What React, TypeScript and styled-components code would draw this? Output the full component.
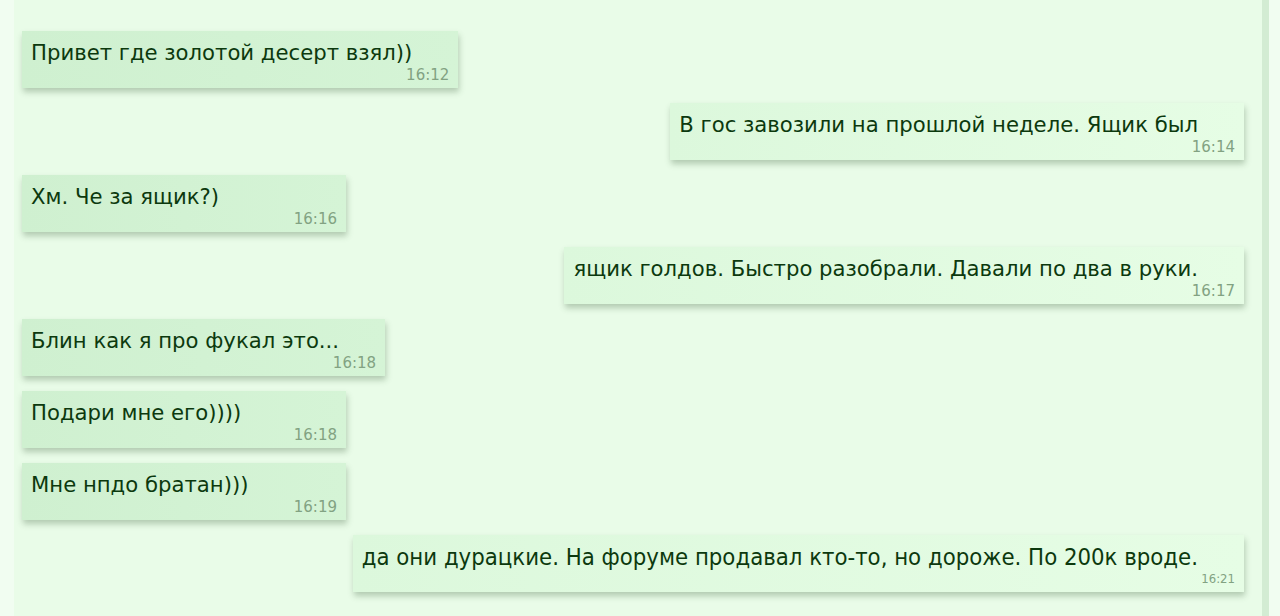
import React from 'react';
import styled, { createGlobalStyle } from 'styled-components';

interface Message {
    text: string;
    time: string;
    mine: boolean;
    narrow?: boolean;
}

const messages: Message[] = [
    { text: 'Привет где золотой десерт взял))', time: '16:12', mine: false },
    { text: 'В гос завозили на прошлой неделе. Ящик был', time: '16:14', mine: true },
    { text: 'Хм. Че за ящик?)', time: '16:16', mine: false },
    { text: 'ящик голдов. Быстро разобрали. Давали по два в руки.', time: '16:17', mine: true },
    { text: 'Блин как я про фукал это...', time: '16:18', mine: false },
    { text: 'Подари мне его))))', time: '16:18', mine: false },
    { text: 'Мне нпдо братан)))', time: '16:19', mine: false },
    { text: 'да они дурацкие. На форуме продавал кто-то, но дороже. По 200к вроде.', time: '16:21', mine: true, narrow: true },
];

const GlobalStyle = createGlobalStyle`
    html, body {
        margin: 0;
        padding: 0;
        background: #f1fdf1;
        height: 100%;
        overflow: hidden;
    }
`;

const Page = styled.div`
    display: flex;
    height: 616px;
`;

const ChatArea = styled.div`
    box-sizing: border-box;
    margin-left: 14px;
    width: 1255px;
    height: 616px;
    padding: 31px 18px 0 8px;
    background: #e9fce8;
    border-right: 7px solid #d3ecd3;
    display: flex;
    flex-direction: column;
    align-items: flex-start;
    gap: 15px;
`;

const Bubble = styled.div<{ $mine: boolean; $narrow?: boolean }>`
    box-sizing: border-box;
    min-width: 324px;
    height: 57px;
    padding: 10px 9px 4px 9px;
    align-self: ${props => (props.$mine ? 'flex-end' : 'flex-start')};
    background: ${props =>
        props.$mine
            ? 'linear-gradient(90deg, #dcf8dc 0%, #e6fde5 100%)'
            : 'linear-gradient(90deg, #cff0d0 0%, #d5f4d6 100%)'};
    box-shadow: 1px 4px 6px rgba(40, 80, 40, 0.28);
    font-family: ${props =>
        props.$narrow ? '"DejaVu Sans Condensed", "DejaVu Sans", sans-serif' : '"DejaVu Sans", Verdana, sans-serif'};
    font-stretch: ${props => (props.$narrow ? 'condensed' : 'normal')};
`;

const Text = styled.div<{ $narrow?: boolean }>`
    padding-right: 37px;
    font-size: ${props => (props.$narrow ? '23.7px' : '21.2px')};
    line-height: 24px;
    color: #0c390e;
    white-space: nowrap;
`;

const Time = styled.div<{ $narrow?: boolean }>`
    margin-top: 1px;
    font-size: ${props => (props.$narrow ? '13px' : '15px')};
    line-height: 18px;
    color: #82a282;
    text-align: right;
`;

const App: React.FC = () => {
    return (
        <>
            <GlobalStyle />
            <Page>
                <ChatArea>
                    {messages.map((msg, index) => (
                        <Bubble key={index} $mine={msg.mine} $narrow={msg.narrow}>
                            <Text $narrow={msg.narrow}>{msg.text}</Text>
                            <Time $narrow={msg.narrow}>{msg.time}</Time>
                        </Bubble>
                    ))}
                </ChatArea>
            </Page>
        </>
    );
};

export default App;
